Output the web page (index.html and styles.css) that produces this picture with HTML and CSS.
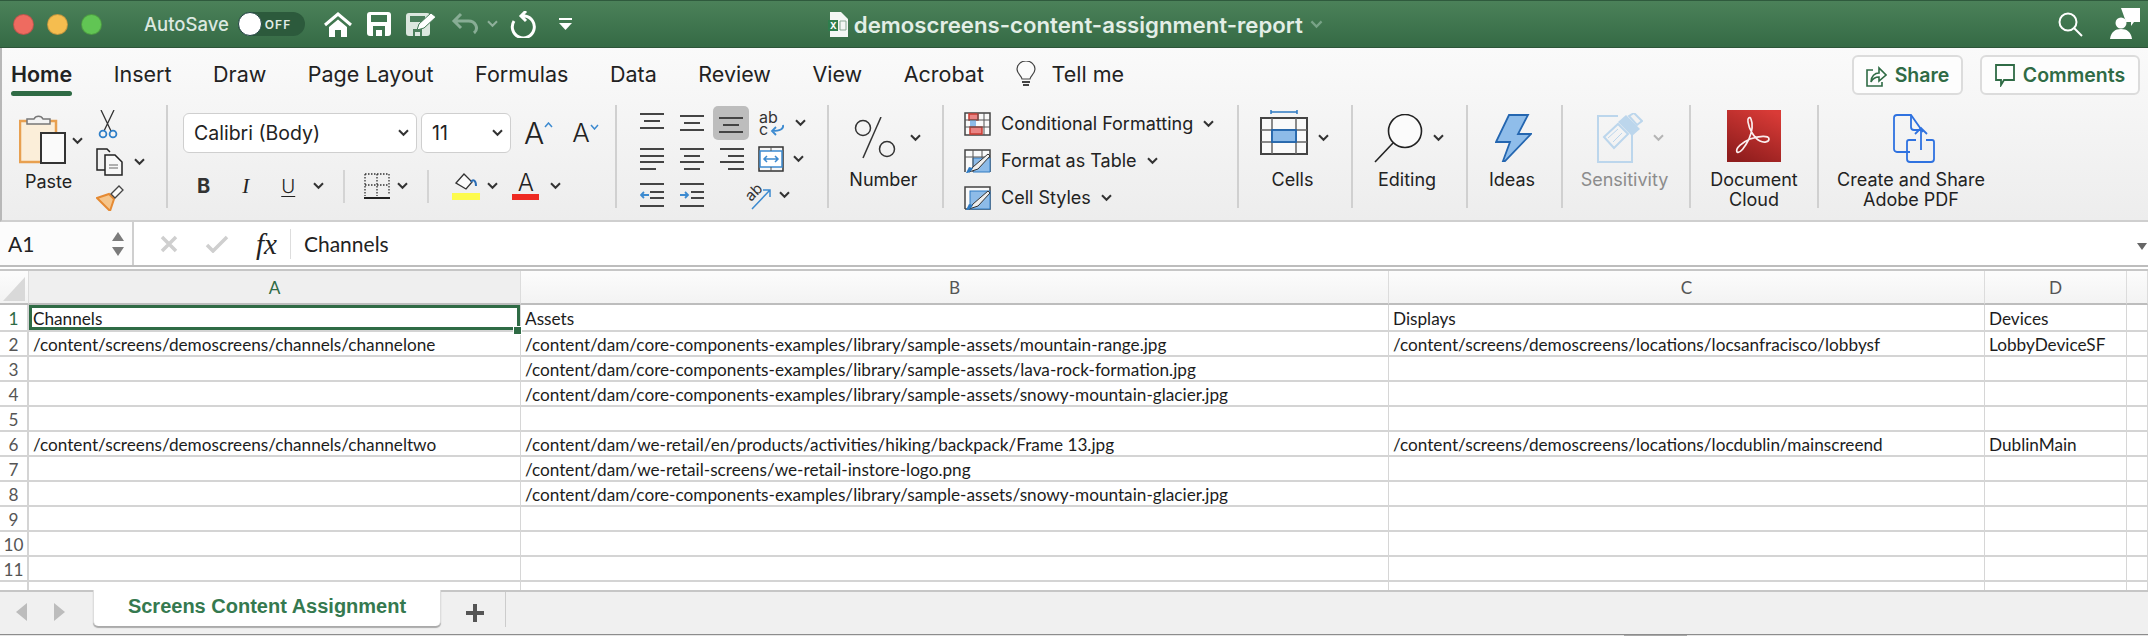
FILE: index.html
```html
<!DOCTYPE html>
<html lang="en">
<head>
    <meta charset="UTF-8">
    <title>demoscreens-content-assignment-report</title>
    <link rel="stylesheet" href="styles.css">
</head>
<body>
    <svg class="defs">
        <symbol id="chev" viewBox="0 0 11 8"><path d="M1 1.2l4.5 4.6L10 1.2" fill="none" stroke="currentColor" stroke-width="2"/></symbol>
    </svg>

    <!-- Title bar -->
    <header class="titlebar">
        <div class="lights">
            <span class="light red"></span>
            <span class="light yellow"></span>
            <span class="light green"></span>
        </div>
        <span class="autosave">AutoSave</span>
        <div class="toggle"><span class="knob"></span><span class="off">OFF</span></div>
        <svg class="ic-home" width="28" height="25" viewBox="0 0 28 25"><path d="M1 13L14 2l13 11" fill="none" stroke="#fff" stroke-width="3"/><path d="M5 15l9-7.500 9 7.500v10h-6v-7h-6v7H5z" fill="#fff"/></svg>
        <svg class="ic-save" width="24" height="24" viewBox="0 0 24 24"><rect width="24" height="24" rx="3" fill="#fff"/><rect x="4" y="3" width="16" height="7" fill="#3f7650"/><path d="M6 24v-10h12v10h-3v-6H9v6z" fill="#3f7650"/></svg>
        <svg class="ic-edit" width="31" height="24" viewBox="0 0 31 24"><rect y="1" width="24" height="23" rx="3" fill="#dce7df"/><rect x="4" y="4" width="15" height="6" fill="#4b7f5c"/><path d="M7 24v-7h9v7h-2v-4h-5v4z" fill="#4b7f5c"/><path d="M11 18l2-6L25 1l5 4-12 11z" fill="#fff" stroke="#437a55"/></svg>
        <svg class="ic-undo" width="28" height="24" viewBox="0 0 28 24"><path d="M10 2L3 9l7 7M3 9h14a8 7 0 0 1 6 12" fill="none" stroke="#88ad95" stroke-width="3"/></svg>
        <svg class="chev dim" width="11" height="8"><use href="#chev"/></svg>
        <svg class="ic-redo" width="27" height="27" viewBox="0 0 27 27"><path d="M5 10a11 11 0 1 0 11-5h-4M17 0l-5 5 5 5" fill="none" stroke="#fff" stroke-width="3"/></svg>
        <svg class="ic-more" width="13" height="12" viewBox="0 0 13 12"><rect width="13" height="2" fill="#fff"/><path d="M0 5h13l-6.500 7z" fill="#fff"/></svg>
        <div class="doc-title">
            <svg width="20" height="25" viewBox="0 0 20 25"><path d="M2 0h11l7 7v18H2z" fill="#f4f6f4"/><rect y="8" width="10" height="11" fill="#2f7d4c"/><text x="2" y="17" class="xl-x">X</text><path d="M12 9h6v9h-6z" fill="none" stroke="#8aa795"/></svg>
            <span>demoscreens-content-assignment-report</span>
            <svg class="chev faint" width="13" height="9"><use href="#chev"/></svg>
        </div>
        <svg class="ic-search" width="25" height="25" viewBox="0 0 25 25"><circle cx="10" cy="10" r="8.500" fill="none" stroke="#fff" stroke-width="2"/><path d="M16 16l8 8" stroke="#fff" stroke-width="2"/></svg>
        <svg class="ic-person" width="30" height="32" viewBox="0 0 30 32"><path d="M11 0h19v14h-6l-3 4v-4h-5z" fill="#fff"/><circle cx="11" cy="15" r="5.500" fill="#fff"/><path d="M0 31c1-7 5-10 11-10s10 3 11 10z" fill="#fff"/></svg>
    </header>

    <!-- Ribbon -->
    <section class="ribbon">
        <nav class="tabs">
            <a class="tab active">Home</a>
            <a class="tab">Insert</a>
            <a class="tab">Draw</a>
            <a class="tab">Page Layout</a>
            <a class="tab">Formulas</a>
            <a class="tab">Data</a>
            <a class="tab">Review</a>
            <a class="tab">View</a>
            <a class="tab">Acrobat</a>
            <div class="tell">
                <svg width="20" height="26" viewBox="0 0 20 26"><path d="M6 18c0-3-5-5-5-10a9 8 0 0 1 18 0c0 5-5 7-5 10z" fill="#fbfbfb" stroke="#444" stroke-width="1.200"/><path d="M6 21h8M7 24h6" stroke="#444" stroke-width="2"/></svg>
                <span>Tell me</span>
            </div>
            <div class="actions">
                <button class="action share">
                    <svg width="21" height="23" viewBox="0 0 21 23"><path d="M7 6H1v16h15v-4" fill="none" stroke="#2f6b45" stroke-width="1.600"/><path d="M5 18c0-6 4-9 8-9V4l7 7-7 6v-4c-3 0-6 1-8 5z" fill="none" stroke="#2f6b45" stroke-width="1.600"/></svg>
                    Share
                </button>
                <button class="action comments">
                    <svg width="20" height="23" viewBox="0 0 20 23"><path d="M1 1h18v15H9l-3 5v-5H1z" fill="none" stroke="#2f6b45" stroke-width="1.800"/></svg>
                    Comments
                </button>
            </div>
        </nav>

        <div class="groups">
            <div class="group clipboard">
                <div class="paste">
                    <svg width="48" height="52" viewBox="0 0 48 52"><rect x="1" y="8" width="36" height="41" fill="#fbeed9" stroke="#e8a050" stroke-width="2.500"/><path d="M8 11V6h7a5 5 0 0 1 9 0h7v5z" fill="#f3f3f3" stroke="#777" stroke-width="1.500"/><rect x="22" y="20" width="24" height="30" fill="#fafafa" stroke="#333" stroke-width="2"/></svg>
                    <span class="label">Paste</span>
                </div>
                <svg class="chev paste-chev" width="11" height="8"><use href="#chev"/></svg>
                <div class="clip-tools">
                    <svg width="20" height="29" viewBox="0 0 20 29"><path d="M3 0l10 21M16 0L6 21" stroke="#333" stroke-width="1.300"/><circle cx="5" cy="24" r="3.400" fill="none" stroke="#2f7fc8" stroke-width="1.800"/><circle cx="15" cy="24" r="3.400" fill="none" stroke="#2f7fc8" stroke-width="1.800"/></svg>
                    <div class="copy-row">
                        <svg width="28" height="28" viewBox="0 0 28 28"><path d="M9 22H1V1h10l3 3" fill="none" stroke="#222" stroke-width="1.500"/><path d="M9 7h10l7 7v13H9z" fill="#f8f8f8" stroke="#222" stroke-width="1.500"/><path d="M13 17h9M13 20h9" stroke="#666"/></svg>
                        <svg class="chev" width="11" height="8"><use href="#chev"/></svg>
                    </div>
                    <svg width="28" height="26" viewBox="0 0 28 26"><path d="M1 13l12-4 5 5-4 12z" fill="#f5c58b" stroke="#e58a33" stroke-width="2"/><path d="M15 9l8-8 4 4-8 8z" fill="#fafafa" stroke="#444" stroke-width="1.300"/></svg>
                </div>
            </div>

            <div class="group font">
                <div class="font-row">
                    <div class="select font-name">Calibri (Body)<svg class="chev" width="11" height="8"><use href="#chev"/></svg></div>
                    <div class="select font-size">11<svg class="chev" width="11" height="8"><use href="#chev"/></svg></div>
                    <span class="grow">A<svg width="9" height="6" viewBox="0 0 9 6"><path d="M1 5l3.500-4L8 5" fill="none" stroke="#3c8ad0" stroke-width="1.500"/></svg></span>
                    <span class="shrink">A<svg width="9" height="6" viewBox="0 0 9 6"><path d="M1 1l3.500 4L8 1" fill="none" stroke="#3c8ad0" stroke-width="1.500"/></svg></span>
                </div>
                <div class="format-row">
                    <b class="fmt-b">B</b>
                    <i class="fmt-i">I</i>
                    <span class="fmt-u">U</span>
                    <svg class="chev" width="11" height="8"><use href="#chev"/></svg>
                    <span class="vsep"></span>
                    <svg width="26" height="26" viewBox="0 0 26 26"><path d="M1 1h24v20M1 1v22M13 1v22M1 12h24" fill="none" stroke="#333" stroke-width="1.300" stroke-dasharray="1.500 1.500"/><path d="M0 25h26" stroke="#222" stroke-width="2"/></svg>
                    <svg class="chev" width="11" height="8"><use href="#chev"/></svg>
                    <span class="vsep"></span>
                    <svg class="fill-ic" width="28" height="28" viewBox="0 0 28 28"><path d="M4 11L12 2l8 8-6 7z" fill="#fbfbfb" stroke="#333" stroke-width="1.300"/><path d="M19 10c2-3 5-2 5 4" fill="none" stroke="#2a6db5" stroke-width="2"/><rect y="21" width="28" height="7" fill="#fdfb4d"/></svg>
                    <svg class="chev" width="11" height="8"><use href="#chev"/></svg>
                    <span class="color-a">A</span>
                    <svg class="chev" width="11" height="8"><use href="#chev"/></svg>
                </div>
            </div>

            <div class="group align">
                <div class="align-grid">
                    <svg width="24" height="22" viewBox="0 0 24 22"><path d="M0 2h24M4 9h16M0 16h24" stroke="#444" stroke-width="2"/></svg>
                    <svg width="24" height="22" viewBox="0 0 24 22"><path d="M0 4h24M4 11h16M0 18h24" stroke="#444" stroke-width="2"/></svg>
                    <span class="pressed"><svg width="24" height="22" viewBox="0 0 24 22"><path d="M0 6h24M4 13h16M0 20h24" stroke="#444" stroke-width="2"/></svg></span>
                    <div class="wrap-ic">
                        <svg width="28" height="40" viewBox="0 0 28 40"><text x="1" y="20" class="ab">ab<tspan x="1" dy="12">c</tspan></text><path d="M25 22c1 4-3 6-11 6m4-4l-4 4 4 4" fill="none" stroke="#3c8ad0" stroke-width="1.800"/></svg>
                        <svg class="chev" width="11" height="8"><use href="#chev"/></svg>
                    </div>
                    <svg width="24" height="22" viewBox="0 0 24 22"><path d="M0 1h24M0 8h24M0 14h24M0 21h16" stroke="#444" stroke-width="2"/></svg>
                    <svg width="24" height="22" viewBox="0 0 24 22"><path d="M0 1h24M4 8h16M0 14h24M4 21h16" stroke="#444" stroke-width="2"/></svg>
                    <svg width="24" height="22" viewBox="0 0 24 22"><path d="M0 1h24M8 8h16M0 14h24M8 21h16" stroke="#444" stroke-width="2"/></svg>
                    <div class="wrap-ic">
                        <svg width="26" height="26" viewBox="0 0 26 26"><rect x="1" y="1" width="24" height="24" fill="#f7f7f7" stroke="#333" stroke-width="1.500"/><rect x="2" y="5" width="22" height="16" fill="#fff" stroke="#3c8ad0" stroke-width="1.500"/><path d="M13 1v4M13 21v4" stroke="#555"/><path d="M6 13h14M9 10l-3 3 3 3M17 10l3 3-3 3" fill="none" stroke="#3c8ad0" stroke-width="1.500"/></svg>
                        <svg class="chev" width="11" height="8"><use href="#chev"/></svg>
                    </div>
                    <svg width="24" height="24" viewBox="0 0 24 24"><path d="M0 1h24M10 9h14M10 15h14M0 23h24" stroke="#444" stroke-width="2"/><path d="M9 12H1m3-3l-3 3 3 3" fill="none" stroke="#3c8ad0" stroke-width="1.800"/></svg>
                    <svg width="24" height="24" viewBox="0 0 24 24"><path d="M0 1h24M11 9h13M11 15h13M0 23h24" stroke="#444" stroke-width="2"/><path d="M0 12h8m-3-3l3 3-3 3" fill="none" stroke="#3c8ad0" stroke-width="1.800"/></svg>
                    <span class="orient-cell">
                        <svg width="34" height="34" viewBox="0 0 34 34"><text class="ab" transform="translate(11 24) rotate(-45)">ab</text><path d="M12 31L30 12m-7 0h7v7" fill="none" stroke="#3c8ad0" stroke-width="1.500"/></svg>
                        <svg class="chev" width="11" height="8"><use href="#chev"/></svg>
                    </span>
                </div>
            </div>

            <div class="group number big">
                <div class="big-top">
                    <svg width="42" height="42" viewBox="0 0 42 42"><circle cx="9" cy="11" r="7.500" fill="none" stroke="#333" stroke-width="1.500"/><circle cx="33" cy="32" r="7.500" fill="none" stroke="#333" stroke-width="1.500"/><path d="M27 0L9 41" stroke="#333" stroke-width="1.500"/></svg>
                    <svg class="chev" width="11" height="8"><use href="#chev"/></svg>
                </div>
                <span class="label">Number</span>
            </div>

            <div class="group styles">
                <div class="style-row">
                    <svg width="27" height="24" viewBox="0 0 27 24"><rect x="1" y="1" width="25" height="22" fill="#fafafa" stroke="#444" stroke-width="1.500"/><rect x="5" y="2" width="9" height="6" fill="#e98484" stroke="#c93b32" stroke-width="1.500"/><rect x="6" y="8" width="6" height="7" fill="#8dbbe8"/><rect x="6" y="15" width="12" height="7" fill="#e98484" stroke="#c93b32" stroke-width="1.500"/><path d="M1 8h25M1 15h25M14 1v7M20 1v22" stroke="#555"/></svg>
                    <span>Conditional Formatting</span>
                    <svg class="chev" width="11" height="8"><use href="#chev"/></svg>
                </div>
                <div class="style-row">
                    <svg width="27" height="24" viewBox="0 0 27 24"><path d="M1 23V1h25v22" fill="#fafafa" stroke="#444" stroke-width="1.500"/><path d="M9 9h17v14H9z" fill="#8dbbe8" stroke="#2e7ac2"/><path d="M1 8h25M9 1v22M18 1v8" stroke="#555"/><path d="M5 23l4-5L24 5l2 2-12 13z" fill="#eee" stroke="#333"/><path d="M2 24c3 0 5-1 7-5l-4-1z" fill="#2e7ac2"/></svg>
                    <span>Format as Table</span>
                    <svg class="chev" width="11" height="8"><use href="#chev"/></svg>
                </div>
                <div class="style-row">
                    <svg width="27" height="24" viewBox="0 0 27 24"><path d="M1 23V1h25v22H1" fill="#fafafa" stroke="#444" stroke-width="1.500"/><rect x="6" y="5" width="20" height="18" fill="#8dbbe8" stroke="#2e7ac2"/><path d="M5 23l4-5L24 5l2 2-12 13z" fill="#eee" stroke="#333"/><path d="M2 24c3 0 5-1 7-5l-4-1z" fill="#2e7ac2"/></svg>
                    <span>Cell Styles</span>
                    <svg class="chev" width="11" height="8"><use href="#chev"/></svg>
                </div>
            </div>

            <div class="group cells big">
                <div class="big-top">
                    <svg width="48" height="46" viewBox="0 0 48 46"><path d="M1 3h26M1 1v4M27 1v4" transform="translate(10 0)" stroke="#2e7ac2" fill="none" stroke-width="1.500"/><rect x="1" y="9" width="46" height="36" fill="#fafafa" stroke="#444" stroke-width="2"/><path d="M12 9v36M36 9v36M1 21h46M1 33h46" stroke="#666" stroke-width="1.500"/><rect x="12" y="21" width="24" height="12" fill="#8dbbe8" stroke="#2165ad" stroke-width="1.800"/></svg>
                    <svg class="chev" width="11" height="8"><use href="#chev"/></svg>
                </div>
                <span class="label">Cells</span>
            </div>

            <div class="group editing big">
                <div class="big-top">
                    <svg width="49" height="49" viewBox="0 0 49 49"><circle cx="31" cy="17" r="16.500" fill="#fbfbfb" stroke="#222" stroke-width="1.600"/><path d="M19 29L1 48" stroke="#222" stroke-width="1.600"/></svg>
                    <svg class="chev" width="11" height="8"><use href="#chev"/></svg>
                </div>
                <span class="label">Editing</span>
            </div>

            <div class="group ideas big">
                <div class="big-top">
                    <svg width="37" height="48" viewBox="0 0 37 48"><path d="M14 1h19L23 20h13L10 47h-2l7-19H1z" fill="#8fbdea" stroke="#2466b0" stroke-width="1.800"/></svg>
                </div>
                <span class="label">Ideas</span>
            </div>

            <div class="group sensitivity big">
                <div class="big-top">
                    <svg width="46" height="50" viewBox="0 0 46 50"><path d="M21 3H1v46h34V22" fill="none" stroke="#bcd6ec" stroke-width="2"/><path d="M7 24L21 11l10 10-14 14z" fill="none" stroke="#bcd6ec" stroke-width="2"/><path d="M11 25l10-9M16 29l9-9" stroke="#bcd6ec"/><path d="M21 9l8-7 14 14-8 7z" fill="#bcd6ec"/><path d="M32 3l5-3 8 8-5 4z" fill="#f2f2f2" stroke="#bcd6ec" stroke-width="2"/></svg>
                    <svg class="chev light-chev" width="11" height="8"><use href="#chev"/></svg>
                </div>
                <span class="label muted">Sensitivity</span>
            </div>

            <div class="group cloud big">
                <div class="big-top">
                    <svg width="54" height="52" viewBox="0 0 54 52">
                        <defs><linearGradient id="acro" x1="0.800" y1="0" x2="0.300" y2="1"><stop offset="0" stop-color="#d93b37"/><stop offset="1" stop-color="#8f1d1d"/></linearGradient></defs>
                        <rect width="54" height="52" fill="url(#acro)"/>
                        <path d="M10 42c3 2 8-5 12-13 3-7 4-15 2-20-1-3-4-1-3 3 1 7 6 16 12 19 4 2 9 1 9-2 0-4-10-3-19 0-7 3-15 9-13 13z" fill="none" stroke="#fbeeee" stroke-width="1.700"/>
                    </svg>
                </div>
                <span class="label">Document<br>Cloud</span>
            </div>

            <div class="group pdf big">
                <div class="big-top">
                    <svg width="42" height="50" viewBox="0 0 42 50"><path d="M17 38H4a3 3 0 0 1-3-3V4a3 3 0 0 1 3-3h14l12 17" fill="none" stroke="#2f72e0" stroke-width="1.800"/><path d="M18 1v12a3 3 0 0 0 3 3h9" fill="none" stroke="#2f72e0" stroke-width="1.800"/><path d="M23 26h-7a2 2 0 0 0-2 2v17a3 3 0 0 0 3 3h21a3 3 0 0 0 3-3V28a2 2 0 0 0-2-2h-6M28 36V14m-6 6l6-6 6 6" fill="none" stroke="#2f72e0" stroke-width="1.800"/></svg>
                </div>
                <span class="label">Create and Share<br>Adobe PDF</span>
            </div>
        </div>
    </section>

    <!-- Formula bar -->
    <div class="formula-bar">
        <div class="name-box">
            <span>A1</span>
            <div class="spin"><i class="up"></i><i class="down"></i></div>
        </div>
        <svg class="f-x" width="18" height="18" viewBox="0 0 18 18"><path d="M2 2l14 14M16 2L2 16" stroke="#cfcfcf" stroke-width="3.500"/></svg>
        <svg class="f-ok" width="24" height="18" viewBox="0 0 24 18"><path d="M2 10l6 6L22 2" fill="none" stroke="#cfcfcf" stroke-width="3.500"/></svg>
        <span class="fx">fx</span>
        <span class="formula-text">Channels</span>
        <i class="formula-drop"></i>
    </div>

    <!-- Sheet -->
    <div class="sheet">
        <table class="cells-table">
            <colgroup>
                <col class="c-row"><col class="c-a"><col class="c-b"><col class="c-c"><col class="c-d"><col>
            </colgroup>
            <thead>
                <tr>
                    <th class="corner"><i></i></th>
                    <th class="on">A</th><th>B</th><th>C</th><th>D</th><th></th>
                </tr>
            </thead>
            <tbody>
                <tr class="first"><th class="on">1</th><td class="sel">Channels<span class="handle"></span></td><td>Assets</td><td>Displays</td><td>Devices</td><td></td></tr>
                <tr><th>2</th><td>/content/screens/demoscreens/channels/channelone</td><td>/content/dam/core-components-examples/library/sample-assets/mountain-range.jpg</td><td>/content/screens/demoscreens/locations/locsanfracisco/lobbysf</td><td>LobbyDeviceSF</td><td></td></tr>
                <tr><th>3</th><td></td><td>/content/dam/core-components-examples/library/sample-assets/lava-rock-formation.jpg</td><td></td><td></td><td></td></tr>
                <tr><th>4</th><td></td><td>/content/dam/core-components-examples/library/sample-assets/snowy-mountain-glacier.jpg</td><td></td><td></td><td></td></tr>
                <tr><th>5</th><td></td><td></td><td></td><td></td><td></td></tr>
                <tr><th>6</th><td>/content/screens/demoscreens/channels/channeltwo</td><td>/content/dam/we-retail/en/products/activities/hiking/backpack/Frame 13.jpg</td><td>/content/screens/demoscreens/locations/locdublin/mainscreend</td><td>DublinMain</td><td></td></tr>
                <tr><th>7</th><td></td><td>/content/dam/we-retail-screens/we-retail-instore-logo.png</td><td></td><td></td><td></td></tr>
                <tr><th>8</th><td></td><td>/content/dam/core-components-examples/library/sample-assets/snowy-mountain-glacier.jpg</td><td></td><td></td><td></td></tr>
                <tr><th>9</th><td></td><td></td><td></td><td></td><td></td></tr>
                <tr><th>10</th><td></td><td></td><td></td><td></td><td></td></tr>
                <tr><th>11</th><td></td><td></td><td></td><td></td><td></td></tr>
                <tr><th></th><td></td><td></td><td></td><td></td><td></td></tr>
            </tbody>
        </table>
    </div>

    <!-- Sheet tabs -->
    <footer class="sheet-tabs">
        <i class="nav-prev"></i>
        <i class="nav-next"></i>
        <div class="sheet-tab">Screens Content Assignment</div>
        <svg class="plus" width="18" height="18" viewBox="0 0 18 18"><path d="M9 0v18M0 9h18" stroke="#555" stroke-width="4"/></svg>
        <span class="tab-sep"></span>
    </footer>
    <div class="scroll-strip"><span class="thumb"></span></div>
</body>
</html>
```

FILE: styles.css
```css
* {
    box-sizing: border-box;
}
body {
    margin: 0;
    width: 2148px;
    height: 636px;
    overflow: hidden;
    font-family: Inter, "Liberation Sans", sans-serif;
    color: #222;
    background-color: #fff;
}
.defs {
    display: none;
}
.chev {
    flex: none;
    color: #333;
}
svg {
    flex: none;
    display: block;
}

/* Title bar */
.titlebar {
    display: flex;
    align-items: center;
    height: 48px;
    background: linear-gradient(#4b8159, #356a45);
    border-top: 1px solid #2f5a3d;
    border-bottom: 1px solid #2d5539;
    padding-left: 13px;
}
.lights {
    display: flex;
    gap: 13px;
}
.light {
    width: 21px;
    height: 21px;
    border-radius: 50%;
    border: 1px solid rgba(0, 0, 0, 0.2);
}
.light.red { background-color: #ee6b60; }
.light.yellow { background-color: #f5bd4f; }
.light.green { background-color: #61c554; }
.autosave {
    margin-left: 42px;
    font-size: 18.5px;
    font-weight: 500;
    color: #dce8e0;
}
.toggle {
    display: flex;
    align-items: center;
    width: 67px;
    height: 24px;
    margin-left: 9px;
    border-radius: 12px;
    background-color: #2c5a3c;
}
.knob {
    width: 24px;
    height: 24px;
    border-radius: 50%;
    background-color: #fff;
    border: 1px solid #244;
}
.off {
    margin-left: 3px;
    font-size: 12px;
    font-weight: 600;
    letter-spacing: 1px;
    color: #e3ede6;
}
.ic-home { margin-left: 19px; }
.ic-save { margin-left: 15px; }
.ic-edit { margin-left: 15px; }
.ic-undo { margin-left: 14px; }
.chev.dim { margin-left: 8px; color: #8fb09b; }
.ic-redo { margin-left: 11px; }
.ic-more { margin-left: 23px; }
.doc-title {
    display: flex;
    align-items: center;
    gap: 6px;
    margin-left: 256px;
    font-size: 22.2px;
    font-weight: 600;
    color: #e3eee6;
}
.xl-x {
    font-size: 9px;
    font-weight: 700;
    fill: #fff;
}
.chev.faint { margin-left: 1px; color: #78a387; }
.ic-search { margin-left: auto; }
.ic-person { margin-left: 27px; margin-right: 8px; }

/* Ribbon */
.ribbon {
    height: 174px;
    background: linear-gradient(#fafafa, #ededed);
    border-left: 2px solid #b8b8b8;
    border-bottom: 2px solid #cfcfcf;
}
.tabs {
    display: flex;
    align-items: center;
    gap: 41.5px;
    height: 52px;
    padding: 0 8px 0 9px;
    font-size: 21.5px;
}
.tab {
    position: relative;
    color: #222;
}
.tab.active {
    font-weight: 600;
}
.tab.active::after {
    content: "";
    position: absolute;
    left: 0;
    right: 0;
    bottom: -9px;
    height: 5px;
    border-radius: 3px;
    background-color: #2f6b45;
}
.tell {
    display: flex;
    align-items: center;
    gap: 15px;
    margin-left: -9px;
}
.actions {
    display: flex;
    gap: 17px;
    margin-left: auto;
    padding-top: 2px;
}
.action {
    display: flex;
    align-items: center;
    justify-content: center;
    gap: 8px;
    height: 40px;
    border: 2px solid #dcdcdc;
    border-radius: 6px;
    background-color: #fdfdfd;
    font-family: inherit;
    font-size: 19.5px;
    font-weight: 600;
    color: #2f6b45;
}
.share { width: 111px; }
.comments { width: 160px; }
.groups {
    display: flex;
    margin-top: 5px;
    height: 103px;
}
.group {
    flex: none;
    border-left: 2px solid #d0d0d0;
}
.group.clipboard { width: 164px; border-left: 0; display: flex; }
.group.font { width: 449px; padding-left: 15px; }
.group.align { width: 212px; padding-left: 23px; }
.group.number { width: 115px; }
.group.styles { width: 295px; padding-left: 20px; }
.group.cells { width: 114px; }
.group.editing { width: 115px; }
.group.ideas { width: 95px; }
.group.sensitivity { width: 128px; }
.group.cloud { width: 128px; }
.group.pdf { width: 186px; }
.label {
    flex: none;
    font-size: 18px;
    line-height: 20px;
    text-align: center;
    color: #222;
}
.label.muted { color: #8c8c8c; }

/* Large button groups */
.big {
    display: flex;
    flex-direction: column;
    align-items: center;
    padding-top: 6px;
}
.big-top {
    flex: none;
    display: flex;
    align-items: center;
    gap: 10px;
    height: 54px;
    margin-bottom: 5px;
}
.number .big-top { gap: 14px; margin-left: 4px; }
.number .label { margin-right: 4px; }
.cells .label, .editing .label, .ideas .label { margin-right: 5px; }
.sensitivity .label { margin-right: 3px; }
.cells .big-top { margin-left: -2px; }
.cells .big-top svg:first-child { margin-top: -12px; }
.editing .big-top { margin-left: -1px; }
.ideas .big-top { margin-right: 3px; }
.sensitivity .big-top { margin-left: 8px; }
.cloud .big-top svg { margin-top: -4px; }
.pdf .big-top { margin-left: 5px; }
.pdf .big-top svg { margin-top: 2px; }
.light-chev { color: #b5b5b5; }

/* Clipboard */
.paste {
    display: flex;
    flex-direction: column;
    align-items: flex-start;
    gap: 7px;
    padding: 8px 0 0 17px;
}
.paste .label { margin-left: 6px; }
.chev.paste-chev { margin: 32px 0 0 0; }
.clip-tools {
    display: flex;
    flex-direction: column;
    align-items: flex-start;
    gap: 9px;
    padding: 5px 0 0 13px;
}
.clip-tools > svg:first-child { margin-left: 2px; }
.copy-row {
    display: flex;
    align-items: center;
    gap: 10px;
}

/* Font */
.font-row {
    display: flex;
    align-items: center;
    gap: 4px;
    padding-top: 8px;
}
.select {
    display: flex;
    align-items: center;
    justify-content: space-between;
    height: 40px;
    padding: 0 7px 0 10px;
    background-color: #fff;
    border: 1px solid #cfcfcf;
    border-radius: 6px;
    font-size: 19.5px;
}
.font-name { width: 234px; }
.font-size { width: 90px; }
.grow, .shrink {
    display: flex;
    align-items: flex-start;
    font-weight: 300;
    line-height: 1;
}
.grow { margin-left: 9px; font-size: 30px; }
.shrink { margin-left: 15px; font-size: 26px; }
.grow svg, .shrink svg { margin-top: 4px; }
.format-row {
    display: flex;
    align-items: center;
    height: 32px;
    margin-top: 17px;
}
.fmt-b {
    margin-left: 14px;
    font-size: 20px;
    color: #333;
}
.fmt-i {
    margin-left: 32px;
    font-family: "Liberation Serif", serif;
    font-size: 21px;
}
.fmt-u {
    margin-left: 32px;
    font-size: 19px;
    font-weight: 300;
    text-decoration: underline;
    text-underline-offset: 3px;
}
.format-row > .chev { margin-left: 7px; }
.format-row > .vsep + svg { margin-left: 19px; }
.format-row > span + .chev { margin-left: 18px; }
.vsep {
    width: 2px;
    height: 33px;
    margin-left: 19px;
    background-color: #d4d4d4;
}
.format-row > svg.fill-ic { margin-left: 23px; }
.color-a {
    width: 27px;
    margin-left: 14px;
    text-align: center;
    font-size: 24px;
    font-weight: 300;
    line-height: 22px;
    border-bottom: 6px solid #ee2a22;
}
.format-row > .color-a + .chev { margin-left: 11px; }

/* Alignment */
.align-grid {
    display: grid;
    grid-template-columns: 40px 40px 38px 1fr;
    grid-auto-rows: 36px;
    align-items: center;
    justify-items: start;
}
.pressed {
    display: flex;
    align-items: center;
    justify-content: center;
    width: 36px;
    height: 34px;
    margin-left: -7px;
    border-radius: 5px;
    background-color: #bdbdbd;
}
.wrap-ic, .orient-cell {
    display: flex;
    align-items: center;
    gap: 9px;
}
.ab {
    font-size: 16px;
    fill: #333;
}
.orient-cell .ab { font-size: 15px; }
.orient-cell { margin-left: 20px; gap: 5px; grid-column: 3 / 5; }

/* Styles */
.styles {
    display: flex;
    flex-direction: column;
}
.style-row {
    flex: none;
    display: flex;
    align-items: center;
    gap: 10px;
    height: 37px;
    font-size: 18px;
}
.style-row .chev { margin-left: 0; }

/* Formula bar */
.formula-bar {
    display: flex;
    align-items: center;
    height: 45px;
    background-color: #fff;
    border-bottom: 2px solid #bdbdbd;
    font-family: Lato, sans-serif;
    font-size: 21px;
    position: relative;
}
.name-box {
    display: flex;
    align-items: center;
    justify-content: space-between;
    width: 134px;
    height: 100%;
    padding: 0 8px;
    border-right: 2px solid #cfcfcf;
    background-color: #fcfcfc;
}
.spin {
    display: flex;
    flex-direction: column;
    gap: 6px;
}
.up, .down {
    display: block;
    width: 0;
    height: 0;
    border-left: 6px solid transparent;
    border-right: 6px solid transparent;
}
.up { border-bottom: 9px solid #7b7b7b; }
.down { border-top: 9px solid #7b7b7b; }
.f-x { margin-left: 26px; }
.f-ok { margin-left: 27px; }
.fx {
    margin-left: 27px;
    padding-right: 13px;
    font-family: "Liberation Serif", serif;
    font-style: italic;
    font-size: 29px;
    border-right: 1px solid #ddd;
    line-height: 30px;
}
.formula-text { margin-left: 13px; }
.formula-drop {
    position: absolute;
    right: 1px;
    top: 21px;
    border-left: 5px solid transparent;
    border-right: 5px solid transparent;
    border-top: 7px solid #666;
}

/* Sheet */
.sheet {
    height: 321px;
    margin-top: 2px;
    border-top: 2px solid #c6c6c6;
    overflow: hidden;
    background-color: #fff;
}
.cells-table {
    width: 2148px;
    table-layout: fixed;
    border-collapse: separate;
    border-spacing: 0;
    font-family: Lato, sans-serif;
    font-size: 17.2px;
}
.c-row { width: 29px; }
.c-a { width: 492px; }
.c-b { width: 868px; }
.c-c { width: 596px; }
.c-d { width: 142px; }
.cells-table thead th {
    height: 34px;
    padding-top: 2px;
    font-weight: 400;
    color: #555;
    background: linear-gradient(#fcfcfc, #f3f3f3);
    border-right: 1px solid #dcdcdc;
    border-bottom: 2px solid #bdbdbd;
}
.cells-table thead th.on {
    color: #2f6b45;
    background: #efefef;
}
.corner {
    position: relative;
}
.corner i {
    position: absolute;
    right: 3px;
    bottom: 2px;
    border-left: 22px solid transparent;
    border-bottom: 24px solid #d9d9d9;
}
.cells-table tbody th {
    padding: 2px 0 0;
    font-weight: 400;
    color: #555;
    background-color: #fff;
    border-right: 2px solid #d4d4d4;
    border-bottom: 2px solid #d4d4d4;
}
.cells-table tbody th.on { color: #2f6b45; }
.cells-table td {
    height: 25px;
    padding: 2px 4px 0;
    line-height: 20px;
    white-space: nowrap;
    color: #1c1c1c;
    border-right: 1px solid #d6d6d6;
    border-bottom: 2px solid #d4d4d4;
}
.first td, .first th { height: 27px; }
.cells-table td.sel {
    position: relative;
    box-shadow: inset 0 0 0 3px #2f6b45;
}
.handle {
    position: absolute;
    right: -2px;
    bottom: -5px;
    width: 9px;
    height: 9px;
    background-color: #2f6b45;
    border: 1px solid #fff;
}

/* Sheet tabs */
.sheet-tabs {
    display: flex;
    align-items: flex-start;
    height: 44px;
    background-color: #f0f0f0;
    border-top: 2px solid #c6c6c6;
    position: relative;
}
.nav-prev, .nav-next {
    width: 0;
    height: 0;
    margin-top: 11px;
    border-top: 9px solid transparent;
    border-bottom: 9px solid transparent;
}
.nav-prev { margin-left: 16px; border-right: 11px solid #bcbcbc; }
.nav-next { margin-left: 27px; border-left: 11px solid #bcbcbc; }
.sheet-tab {
    width: 348px;
    height: 36px;
    margin-left: 28px;
    margin-top: -2px;
    border-radius: 0 0 5px 5px;
    background-color: #fff;
    border-left: 1px solid #ddd;
    border-right: 1px solid #ddd;
    box-shadow: 0 2px 1px #aaa;
    text-align: center;
    line-height: 33px;
    font-family: "Liberation Sans", sans-serif;
    font-size: 20px;
    font-weight: 700;
    color: #35794f;
}
.plus { margin: 12px 0 0 25px; }
.tab-sep {
    width: 1px;
    height: 35px;
    margin-left: 21px;
    background-color: #ccc;
}
.scroll-strip {
    display: flex;
    height: 4px;
    padding-left: 1624px;
    background-color: #e6e6e6;
    border-top: 1px solid #8c8c8c;
}
.thumb {
    width: 63px;
    background-color: #a8a8a8;
}
```
